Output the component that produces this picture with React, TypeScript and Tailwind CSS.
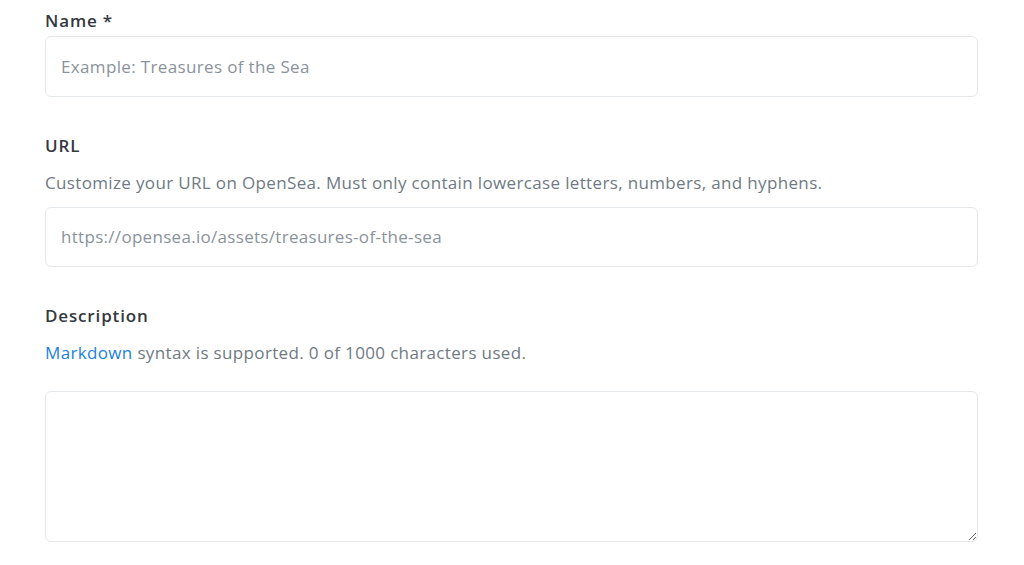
export default function App() {
  return (
    <div className="min-h-screen bg-white px-[45px] text-[#353840] tracking-[0.35px]" style={{ fontFamily: '"Open Sans", "Noto Sans", sans-serif' }}>
      {/* Name */}
      <div className="pt-[9px]">
        <label className="block text-[17px] font-semibold leading-[24px] tracking-[0.85px]">Name *</label>
        <div className="mt-[3px] w-[933px] h-[61px] rounded-[6px] border border-[#e5e8eb] flex items-center px-[15px]">
          <input
            className="w-full outline-none text-[17px] tracking-[0.35px] text-[#353840] placeholder:text-[#8a939b] bg-transparent"
            placeholder="Example: Treasures of the Sea"
          />
        </div>
      </div>

      {/* URL */}
      <div className="pt-[37px]">
        <label className="block text-[17px] font-semibold leading-[24px] tracking-[0.85px]">URL</label>
        <p className="mt-[13px] text-[17px] leading-[24px] text-[#707a83]">
          Customize your URL on OpenSea. Must only contain lowercase letters, numbers, and hyphens.
        </p>
        <div className="mt-[12px] w-[933px] h-[60px] rounded-[6px] border border-[#e5e8eb] flex items-center px-[15px]">
          <input
            className="w-full outline-none text-[17px] tracking-[0.3px] text-[#353840] placeholder:text-[#8a939b] bg-transparent"
            placeholder="https://opensea.io/assets/treasures-of-the-sea"
          />
        </div>
      </div>

      {/* Description */}
      <div className="pt-[37px]">
        <label className="block text-[17px] font-semibold leading-[24px] tracking-[0.85px]">Description</label>
        <p className="mt-[13px] text-[17px] leading-[24px] text-[#707a83]">
          <a className="text-[#2081e2]">Markdown</a> syntax is supported. 0 of 1000 characters used.
        </p>
        <textarea className="mt-[26px] block w-[933px] h-[151px] rounded-[6px] border border-[#e5e8eb] outline-none px-[15px] py-[12px] text-[17px]" />
      </div>
    </div>
  );
}
